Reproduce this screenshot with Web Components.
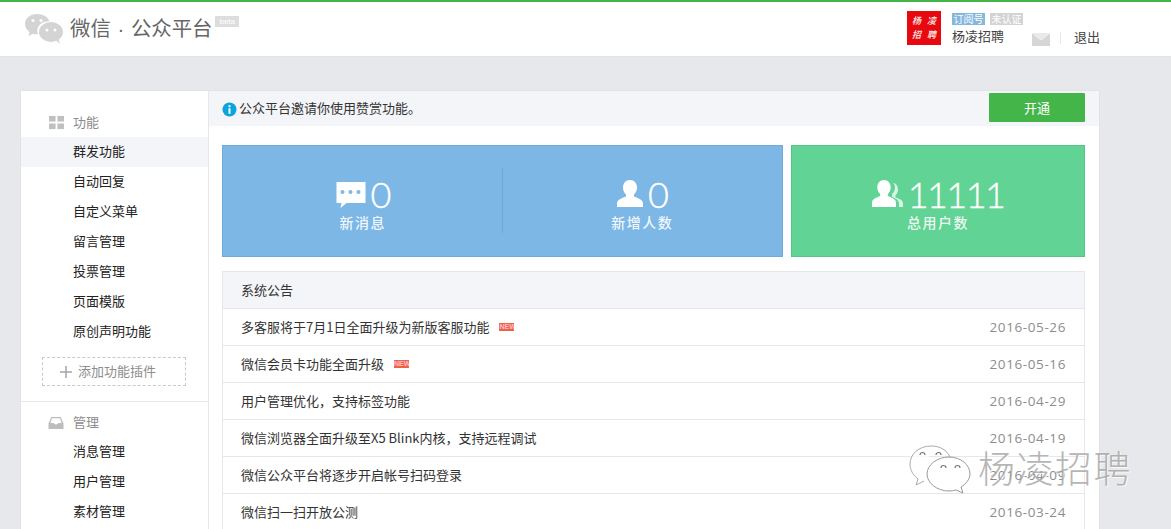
<!DOCTYPE html>
<html lang="zh"><head><meta charset="utf-8">
<style>
html,body{margin:0;padding:0;height:529px;overflow:hidden;background:#e7e8eb;font-family:"Noto Sans CJK SC","Noto Sans",sans-serif;font-size:14px;color:#222}
body{position:relative}
</style></head><body>
<template id="t-head"><style>
:host{display:flex;box-sizing:border-box;height:57px;background:#fff;border-top:2px solid #44b549;border-bottom:1px solid #e2e3e7;align-items:flex-start;position:relative}
.logo{display:flex;align-items:center;margin:10px 0 0 24px;height:34px}
.name{font-family:"Liberation Sans","Noto Sans CJK SC",sans-serif;font-size:20.400px;line-height:34px;color:#666;margin-left:6px;white-space:pre;word-spacing:1px}
.beta{font:8px/11px "Liberation Sans",sans-serif;background:#ddd;color:#fff;padding:0 4px;height:11px;margin:-16px 0 0 3px}
.acct{margin-left:auto;margin-right:71px;display:flex;align-items:flex-start}
.av{width:34px;height:34px;background:#e8080f;margin:9px 11px 0 0;display:grid;grid-template-columns:1fr 1fr;place-items:center;color:#f7dcd6;font-size:9px;line-height:10px;padding:3px 2px;box-sizing:border-box;font-family:"Noto Sans CJK SC",sans-serif;font-weight:700;font-style:italic}
.info{width:80px;margin-top:11px}
.tags{display:flex;gap:5px;height:12px}
.tag{font-size:10px;line-height:12px;height:12px;color:#fff;padding:0 1.500px;background:#85b8dd}
.tag.g{background:#d3d3d3}
.nm{font-size:13px;line-height:20px;margin-top:1px;color:#444}
.mail{margin:31px 0 0 0;width:18px;height:13px;display:block}
.sep{width:1px;height:12px;background:#e7e7eb;margin:30px 13px 0 10px}
.out{font-size:13px;line-height:20px;margin-top:25px;color:#444}
</style>
<div class="logo">
<svg width="40" height="32" viewBox="0 0 40 32"><path fill="#d4d4d4" d="M13 1C6 1 1 5.500 1 11c0 3.200 1.700 6 4.500 8L4.500 23l4.600-2.300c1.300.4 2.600.6 3.900.6h1C13.500 20 13.300 19 13.300 18c0-5.500 5-9.700 11.700-9.700h.3C24 4 19 1 13 1z"/><ellipse fill="#d4d4d4" cx="27" cy="19" rx="12" ry="10"/><path fill="#d4d4d4" d="M32 27l3.500 4-.8-6z"/><circle fill="#fff" cx="9" cy="7.500" r="1.500"/><circle fill="#fff" cx="17" cy="7.500" r="1.500"/><circle fill="#fff" cx="23" cy="17" r="1.500"/><circle fill="#fff" cx="31" cy="17" r="1.500"/></svg>
<span class="name">微信 · 公众平台</span><span class="beta">beta</span></div>
<div class="acct"><div class="av"><span>杨</span><span>凌</span><span>招</span><span>聘</span></div>
<div class="info"><div class="tags"><span class="tag">订阅号</span><span class="tag g">未认证</span></div><div class="nm">杨凌招聘</div></div>
<svg class="mail" viewBox="0 0 18 13"><rect width="18" height="13" fill="#d6d6d6"/><path d="M0 0l9 7 9-7" fill="#e9e9e9" stroke="#f2f2f2" stroke-width="1"/></svg>
<div class="sep"></div><div class="out">退出</div></div>
</template>

<template id="t-side"><style>
:host{display:block;box-sizing:border-box;width:188px;border-right:1px solid #e7e7eb;padding-top:16px;flex:none}
.sec{padding-bottom:15px}
.sec+.sec{border-top:1px solid #e7e7eb;padding-top:5px}
.h{display:flex;align-items:center;height:30px;padding-left:28px;color:#8d8d8d;font-size:13px}
.h span{margin-top:-2px}
.h svg{width:15px;height:15px;margin-right:9px}
.h svg.in{width:16px;margin-left:-1px}
.i{display:block;height:30px;line-height:28px;padding-left:52px;color:#222;font-size:13px}
.i.on{background:#f4f5f9}
.add{box-sizing:border-box;margin:10px 0 0 21px;width:144px;height:29px;border:1px dashed #c9c9c9;display:flex;align-items:center;padding-left:17px;color:#8d8d8d;font-size:13px}
.add span{margin-top:-2px}
.add svg{width:12px;height:12px;margin-right:6px}
</style>
<div class="sec"><div class="h"><svg viewBox="0 0 16 16" fill="#c0c0c0"><rect y="1" width="7" height="6"/><rect x="9" y="1" width="7" height="6"/><rect y="9" width="7" height="6"/><rect x="9" y="9" width="7" height="6"/></svg><span>功能</span></div>
<div class="i on">群发功能</div><div class="i">自动回复</div><div class="i">自定义菜单</div><div class="i">留言管理</div><div class="i">投票管理</div><div class="i">页面模版</div><div class="i">原创声明功能</div>
<div class="add"><svg viewBox="0 0 12 12" stroke="#a5a5a5" stroke-width="1.500"><path d="M6 0v12M0 6h12"/></svg><span>添加功能插件</span></div></div>
<div class="sec"><div class="h"><svg class="in" viewBox="0 0 16 16"><path fill="#bdbdbd" d="M3 2h10l3 7v5a1 1 0 0 1-1 1H1a1 1 0 0 1-1-1V9z"/><path fill="#fff" d="M3.800 3.500h8.400L14 8.500h-3.500c-.3 1-1.200 1.500-2.500 1.500s-2.200-.5-2.500-1.500H2z"/></svg><span>管理</span></div>
<div class="i">消息管理</div><div class="i">用户管理</div><div class="i">素材管理</div></div>
</template>

<template id="t-notice"><style>
:host{display:flex;align-items:center;height:35px;background:#f4f5f9;padding:0 14px 0 13px;font-size:13px;color:#333}
svg{width:15px;height:15px;margin:1px 2px 0 0;flex:none}
span{flex:1;margin-top:-3px}
button{all:unset;width:96px;height:29px;background:#44b549;color:#fff;text-align:center;font-size:13px;line-height:27px;margin-top:-2px;border-radius:1px}
</style><svg viewBox="0 0 15 15"><circle cx="7.500" cy="7.500" r="7" fill="#0aa5dc"/><rect x="6.500" y="6.300" width="2" height="5.500" fill="#fff"/><rect x="6.500" y="3.200" width="2" height="2" fill="#fff"/></svg><span><slot></slot></span><button>开通</button>
</template>

<template id="t-stat"><style>
:host{display:flex;flex-direction:column;align-items:center;flex:1;color:#fff;padding-top:29px;box-sizing:border-box}
.r{display:flex;align-items:center;height:38px}
.n{font:300 36px/38px "Lato","Open Sans","Liberation Sans",sans-serif;margin-left:5px;letter-spacing:-1.600px;-webkit-text-stroke:.4px #fff}
.l{font-size:14px;font-weight:500;line-height:20px;margin-top:-1px;letter-spacing:1.500px;color:rgba(255,255,255,.9)}
::slotted(svg){display:block}
</style><div class="r"><slot></slot><span class="n"></span></div><div class="l"></div>
</template>

<template id="t-table"><style>
:host{display:block;margin:14px 14px 0 13px;border:1px solid #e7e7eb;border-bottom:0}
.h{height:36px;line-height:36px;background:#f4f5f9;padding-left:18px;font-size:13px;color:#333;border-bottom:1px solid #e7e7eb}
</style><div class="h"><slot name="title"></slot></div><slot></slot>
</template>

<template id="t-row"><style>
:host{display:flex;align-items:center;height:36px;border-bottom:1px solid #e7e7eb;padding:0 18px;font-size:13px;color:#333}
.t{display:flex;align-items:center;flex:1;margin-top:-2px}
.new{display:none;font:bold 7px/8px "Liberation Sans",sans-serif;background:#f0643c;color:#fbd;width:15px;height:8px;margin:1px 0 0 10px;text-align:center;overflow:hidden}
:host([new]) .new{display:block}
.d{font:13.500px "Open Sans","Liberation Sans",sans-serif;color:#8d8d8d;letter-spacing:.6px}
</style><div class="t"><slot></slot><span class="new">NEW</span></div><span class="d"></span>
</template>

<template id="t-mark"><style>
:host{position:absolute;left:909px;top:444px;display:flex;align-items:center;pointer-events:none}
svg{width:62px;height:50px;flex:none}
span{font-size:37px;line-height:46px;color:#a4a4a4;letter-spacing:1.500px;margin-left:7px;margin-top:-5px;font-weight:300;opacity:.8;text-shadow:1px 1px 0 #fff}
</style><svg viewBox="0 0 62 50"><g fill="rgba(255,255,255,.75)" stroke="#aaa" stroke-width="1"><path d="M22 2C10 2 1 10 1 20c0 6 3 11 8 15l-2 6 8-4"/><path d="M22 2c9 0 16 4 19 11"/></g><path d="M40 13c-12 0-22 8-22 17s10 17 22 17c2 0 5-.3 7-1l7 3-2-6c5-3 9-8 9-13 0-9-9-17-21-17z" fill="rgba(255,255,255,.85)" stroke="#999"/><path d="M11 11a2.500 2.500 0 0 1 5 0M27 11a2.500 2.500 0 0 1 5 0M32 24a2.500 2.500 0 0 1 5 0M46 24a2.500 2.500 0 0 1 5 0" fill="none" stroke="#777" stroke-width="1.200"/></svg><span>杨凌招聘</span>
</template>

<template id="t-shell"><style>
:host{display:flex;box-sizing:border-box;width:1080px;margin:33px 0 0 20px;background:#fff;border:1px solid #e2e3e7;border-bottom:0;height:439px;overflow:hidden}
.m{flex:1;min-width:0}
.cards{display:flex;gap:8px;margin:19px 14px 0 13px}
.c{height:112px;box-sizing:border-box;display:flex}
.b{width:561px;background:#7cb7e5;border:1px solid #70abd9;position:relative}
.b::after{content:"";position:absolute;left:279px;top:22px;height:65px;width:1px;background:#6ea9d6}
.g{flex:1;background:#61d394;border:1px solid #55c586}
</style>
<slot name="side"></slot>
<div class="m"><slot name="notice"></slot>
<div class="cards"><div class="c b"><slot name="b"></slot></div><div class="c g"><slot name="g"></slot></div></div>
<slot name="table"></slot></div>
</template>

<mp-head></mp-head>
<mp-shell>
<mp-side slot="side"></mp-side>
<mp-notice slot="notice">公众平台邀请你使用赞赏功能。</mp-notice>
<mp-stat slot="b" n="0" l="新消息"><svg width="30" height="27" viewBox="0.500 0 30 27"><path fill="#fff" d="M1 1h29v21H11l-6 5 1-5H1z"/><g fill="#7cb7e5"><circle cx="7" cy="11" r="2"/><circle cx="15" cy="11" r="2"/><circle cx="23" cy="11" r="2"/></g></svg></mp-stat>
<mp-stat slot="b" n="0" l="新增人数"><svg width="26" height="28" viewBox="0 0 26 28"><path fill="#fff" d="M13 0c4.500 0 7 3.500 7 7.500 0 3-1.300 5.500-3 7v2c3 1.500 9 2.500 9 7V27H0v-3.500c0-4.500 6-5.500 9-7v-2c-1.700-1.500-3-4-3-7C6 3.500 8.500 0 13 0z"/></svg></mp-stat>
<mp-stat slot="g" n="11111" l="总用户数"><svg width="31" height="28" viewBox="0 0 31 28"><path fill="#fff" d="M21 3c3.500.5 5 3.500 5 6.500 0 2.500-1 4.500-2.500 5.800v2c2.500 1.300 7.500 2.200 7.500 6.200V27h-4v-3c0-4-3-5.500-7-7v-3c2-1.500 3-4 3-7 0-1.500-.8-3-2-4z" opacity=".75"/><path fill="#fff" d="M12 0c4.300 0 6.700 3.400 6.700 7.300 0 3-1.300 5.300-2.800 6.700v2.100c2.800 1.400 8.100 2.500 8.100 6.800V27H0v-4.100c0-4.300 5.300-5.400 8.100-6.800V14c-1.500-1.400-2.800-3.700-2.800-6.700C5.300 3.400 7.700 0 12 0z"/></svg></mp-stat>
<mp-table slot="table"><span slot="title">系统公告</span>
<mp-row d="2016-05-26" new>多客服将于7月1日全面升级为新版客服功能</mp-row>
<mp-row d="2016-05-16" new>微信会员卡功能全面升级</mp-row>
<mp-row d="2016-04-29">用户管理优化，支持标签功能</mp-row>
<mp-row d="2016-04-19">微信浏览器全面升级至X5 Blink内核，支持远程调试</mp-row>
<mp-row d="2016-04-09">微信公众平台将逐步开启帐号扫码登录</mp-row>
<mp-row d="2016-03-24">微信扫一扫开放公测</mp-row>
</mp-table>
</mp-shell>
<mp-mark></mp-mark>
<script>
function def(name,tid,init){customElements.define(name,class extends HTMLElement{constructor(){super();this.attachShadow({mode:'open'}).appendChild(document.getElementById(tid).content.cloneNode(true));}connectedCallback(){if(init)init(this,this.shadowRoot);}});}
def('mp-head','t-head');def('mp-side','t-side');def('mp-notice','t-notice');def('mp-table','t-table');def('mp-mark','t-mark');def('mp-shell','t-shell');
def('mp-stat','t-stat',(h,s)=>{s.querySelector('.n').textContent=h.getAttribute('n');s.querySelector('.l').textContent=h.getAttribute('l');});
def('mp-row','t-row',(h,s)=>{s.querySelector('.d').textContent=h.getAttribute('d');});
</script>
</body></html>
